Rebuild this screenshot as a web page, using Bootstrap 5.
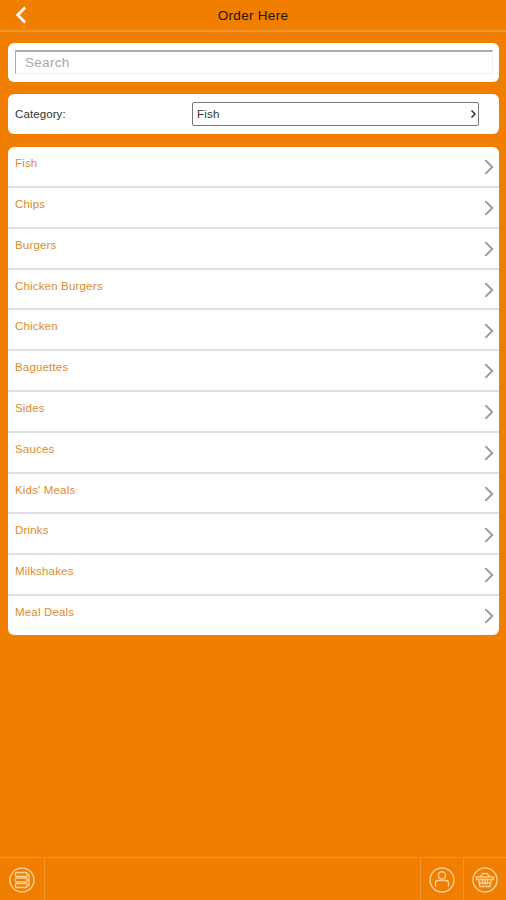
<!DOCTYPE html>
<html lang="en">
<head>
<meta charset="utf-8">
<meta name="viewport" content="width=device-width, initial-scale=1">
<title>Order Here</title>
<link href="https://cdn.jsdelivr.net/npm/bootstrap@5.3.0/dist/css/bootstrap.min.css" rel="stylesheet">
<style>
body{background:#f07e00;font-family:"Liberation Sans",Arial,sans-serif;font-size:11.5px;line-height:14px;height:900px;overflow:hidden}
.topbar{height:32px;border-bottom:2px solid #f2942f;color:#251400;font-size:13.5px;letter-spacing:.3px}
.topbar .title{padding-top:1px}
.topbar .side{width:42px}
.content{padding:11px 7px 0 8px}
.panel{background:#fff;border-radius:6px}
.search-panel{height:38.5px;padding:7px 6px 7px 7px;margin-bottom:12.5px}
.search-panel .form-control{height:24px;border:1px solid;border-color:#aaa #eee #eee #aaa;border-top-width:2px;border-radius:0;font-size:13.5px;letter-spacing:.3px;padding:0 9px;box-shadow:none}
.search-panel .form-control::placeholder{color:#a8a8a8;opacity:1}
.cat-panel{height:39.5px;margin-bottom:13px;padding:0 20px 0 7px;color:#333;letter-spacing:.1px}
.cat-label{width:177px}
.cat-select{height:24px;border:1px solid #777;border-radius:2px;padding:0 1px 0 4px;letter-spacing:.2px}
.menu{height:488.5px;--bs-list-group-border-radius:6px}
.menu .list-group-item{flex:0 0 40.8px;border:0;border-bottom:2px solid #e0e0e0;padding:0 5px 0 7px;color:#dc8c2c;letter-spacing:.17px;background:#fff}
.menu .list-group-item:first-child{flex-basis:41.5px}
.menu .list-group-item:last-child{flex:1 1 0;border-bottom:0}
.menu span{margin-top:9px}
.menu svg{margin-top:12.2px}
.bottombar{height:43px;border-top:1px solid #f39430}
.bottombar svg{margin-top:1px}
.cell-l{width:45px;border-right:1px solid #f39430}
.cell-r{width:43px;border-left:1px solid #f39430}
</style>
<script src="https://cdn.jsdelivr.net/npm/bootstrap@5.3.0/dist/js/bootstrap.bundle.min.js"></script>
</head>
<body class="d-flex flex-column">
<svg class="d-none"><symbol id="chev" viewBox="0 0 10 16"><path d="M1.4 1.2 8.2 8l-6.8 6.8" fill="none" stroke="#999" stroke-width="1.9"/></symbol></svg>
<header class="topbar d-flex align-items-center flex-shrink-0">
  <div class="side d-flex justify-content-center"><svg width="12" height="18" viewBox="0 0 12 18"><path d="M10.2 1.5 2.7 9l7.5 7.5" fill="none" stroke="#fff" stroke-width="2.7"/></svg></div>
  <div class="title flex-grow-1 text-center">Order Here</div>
  <div class="side"></div>
</header>
<main class="content flex-grow-1">
  <div class="panel search-panel"><input class="form-control" type="text" placeholder="Search"></div>
  <div class="panel cat-panel d-flex align-items-center">
    <div class="cat-label">Category:</div>
    <div class="cat-select flex-grow-1 d-flex align-items-center justify-content-between"><span>Fish</span>
      <svg width="7" height="10" viewBox="0 0 7 10"><path d="M1.5 1.5 5 5 1.5 8.5" fill="none" stroke="#333" stroke-width="1.5"/></svg></div>
  </div>
  <div class="list-group menu">
    <a class="list-group-item d-flex justify-content-between align-items-start"><span>Fish</span><svg width="10" height="16"><use href="#chev"/></svg></a>
    <a class="list-group-item d-flex justify-content-between align-items-start"><span>Chips</span><svg width="10" height="16"><use href="#chev"/></svg></a>
    <a class="list-group-item d-flex justify-content-between align-items-start"><span>Burgers</span><svg width="10" height="16"><use href="#chev"/></svg></a>
    <a class="list-group-item d-flex justify-content-between align-items-start"><span>Chicken Burgers</span><svg width="10" height="16"><use href="#chev"/></svg></a>
    <a class="list-group-item d-flex justify-content-between align-items-start"><span>Chicken</span><svg width="10" height="16"><use href="#chev"/></svg></a>
    <a class="list-group-item d-flex justify-content-between align-items-start"><span>Baguettes</span><svg width="10" height="16"><use href="#chev"/></svg></a>
    <a class="list-group-item d-flex justify-content-between align-items-start"><span>Sides</span><svg width="10" height="16"><use href="#chev"/></svg></a>
    <a class="list-group-item d-flex justify-content-between align-items-start"><span>Sauces</span><svg width="10" height="16"><use href="#chev"/></svg></a>
    <a class="list-group-item d-flex justify-content-between align-items-start"><span>Kids' Meals</span><svg width="10" height="16"><use href="#chev"/></svg></a>
    <a class="list-group-item d-flex justify-content-between align-items-start"><span>Drinks</span><svg width="10" height="16"><use href="#chev"/></svg></a>
    <a class="list-group-item d-flex justify-content-between align-items-start"><span>Milkshakes</span><svg width="10" height="16"><use href="#chev"/></svg></a>
    <a class="list-group-item d-flex justify-content-between align-items-start"><span>Meal Deals</span><svg width="10" height="16"><use href="#chev"/></svg></a>
  </div>
</main>
<footer class="bottombar d-flex flex-shrink-0">
  <div class="cell-l d-flex align-items-center justify-content-center">
    <svg width="28" height="28" viewBox="0 0 28 28" fill="none" stroke="#fbcf94" stroke-width="1.4"><circle cx="14" cy="14" r="12"/><rect x="7.5" y="6.5" width="11.5" height="4" rx="1"/><rect x="7.5" y="12" width="11.5" height="4" rx="1"/><rect x="7.5" y="17.500" width="11.5" height="4" rx="1"/><path d="M19 8.500h2v5.500h-2M21 14v5.500h-2"/></svg>
  </div>
  <div class="flex-grow-1"></div>
  <div class="cell-r d-flex align-items-center justify-content-center">
    <svg width="28" height="28" viewBox="0 0 28 28" fill="none" stroke="#fbcf94" stroke-width="1.4"><circle cx="14" cy="14" r="12"/><circle cx="14" cy="9.4" r="3.6"/><path d="M7.5 20.500v-3.500q0-2.500 2.500-2.500h8q2.500 0 2.500 2.500v3.500"/></svg>
  </div>
  <div class="cell-r d-flex align-items-center justify-content-center">
    <svg width="28" height="28" viewBox="0 0 28 28" fill="none" stroke="#fbcf94" stroke-width="1.4"><circle cx="14" cy="14" r="12"/><path d="M5.500 11h17v2.500h-17zM7.500 13.500l1.500 7h10l1.500-7M9 11l3-3.500h4l3 3.500M11.200 13.500l.8 5M14 13.500v5M16.800 13.500l-.8 5M9 17h10"/></svg>
  </div>
</footer>
</body>
</html>
